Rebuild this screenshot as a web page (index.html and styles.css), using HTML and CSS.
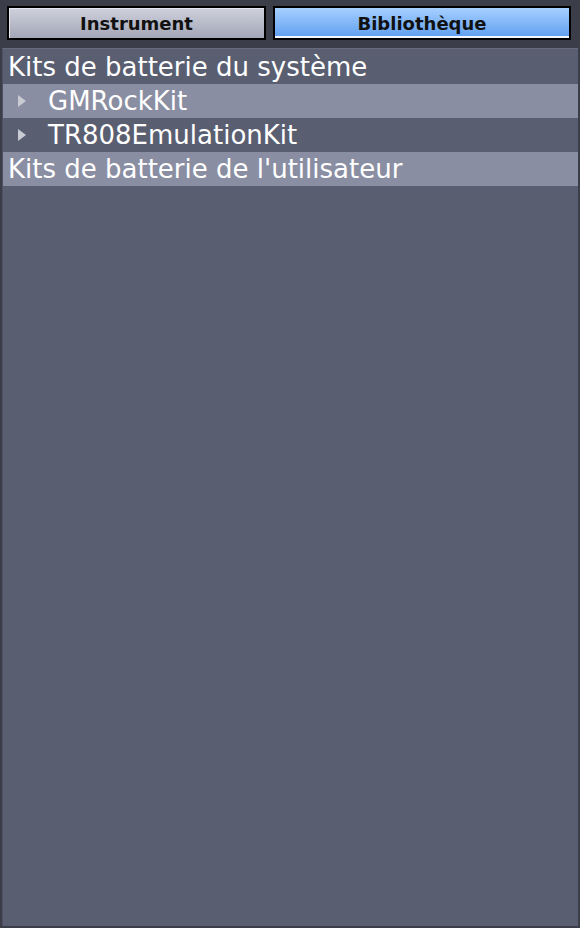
FILE: index.html
```html
<!DOCTYPE html>
<html lang="fr">
<head>
<meta charset="utf-8">
<title>Bibliothèque</title>
<link rel="stylesheet" href="styles.css">
</head>
<body>
<div class="app">
  <div class="tabs">
    <button class="tab tab-gray">Instrument</button>
    <button class="tab tab-blue">Bibliothèque</button>
  </div>
  <div class="panel">
    <div class="row section">Kits de batterie du système</div>
    <div class="row item selected"><span class="arrow"></span>GMRockKit</div>
    <div class="row item"><span class="arrow"></span>TR808EmulationKit</div>
    <div class="row section selected">Kits de batterie de l'utilisateur</div>
  </div>
</div>
</body>
</html>
```
FILE: styles.css
```css
html, body {
  margin: 0;
  padding: 0;
  background: #3b3d48;
  width: 580px;
  height: 928px;
  overflow: hidden;
}
.app {
  display: flex;
  flex-direction: column;
  height: 928px;
  box-sizing: border-box;
  padding: 6px 2px 2px 2px;
}
.tabs {
  display: flex;
  gap: 7px;
  padding: 0 7px 0 5px;
  height: 34px;
}
.tab {
  box-sizing: border-box;
  height: 34px;
  border: 2px solid #000;
  margin: 0;
  padding: 0;
  font-family: "DejaVu Sans", sans-serif;
  font-weight: bold;
  font-size: 18px;
  color: #111;
}
.tab-gray {
  width: 259px;
  background: linear-gradient(#cfd1dc, #a3a6b6);
  box-shadow: inset 1px 1px 0 #e6e7ee;
}
.tab-blue {
  flex: 1;
  background: linear-gradient(#a6cfff, #5e9ef0);
  box-shadow: inset 0 -2px 0 #f2f6ff;
}
.panel {
  flex: 1;
  margin-top: 8px;
  padding-top: 1px;
  background: #595e71;
  border-top: 1px solid #666a7c;
  border-left: 1px solid #4d5162;
  font-family: "DejaVu Sans", sans-serif;
  font-size: 26px;
  color: #fff;
}
.row {
  height: 34px;
  display: flex;
  align-items: center;
  white-space: nowrap;
}
.section {
  padding-left: 5px;
}
.item {
  padding-left: 15px;
}
.selected {
  background: #8a8ea2;
}
.arrow {
  width: 0;
  height: 0;
  border-top: 6px solid transparent;
  border-bottom: 6px solid transparent;
  border-left: 8px solid #c9cbd3;
  margin-right: 22px;
}
```
